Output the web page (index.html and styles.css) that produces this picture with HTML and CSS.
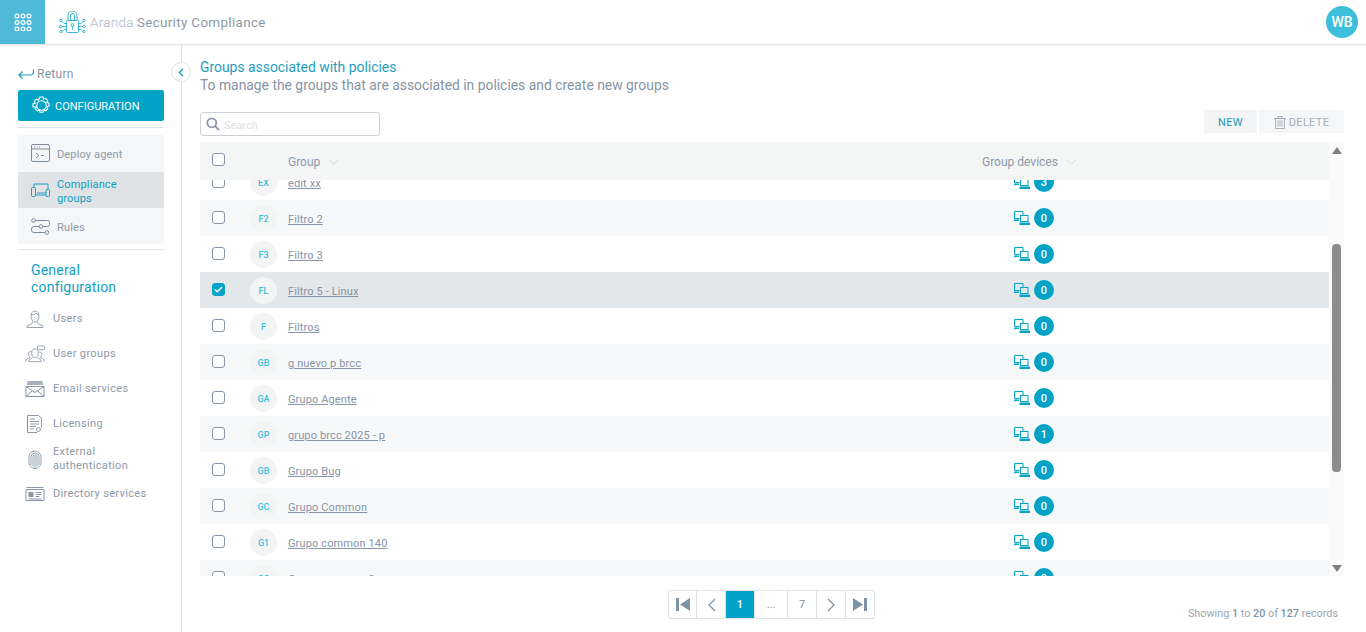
FILE: index.html
```html
<!DOCTYPE html>
<html lang="en">
<head>
<meta charset="utf-8">
<title>Aranda Security Compliance</title>
<link rel="stylesheet" href="styles.css">
</head>
<body>
<svg class="defs" width="0" height="0">
  <defs>
    <symbol id="dev" viewBox="0 0 16 14">
      <path d="M5.500 7.500H.5V.5H9V4" fill="none" stroke="#02a3c6" stroke-width="1"/>
      <rect x="6.500" y="4.500" width="7.500" height="6" fill="none" stroke="#02a3c6" stroke-width="1"/>
      <path d="M0 8.500h5V10H0zM5.500 11.500H16V14H5.500z" fill="#02a3c6"/>
    </symbol>
  </defs>
</svg>
<header class="topbar">
  <div class="apps">
    <svg width="18" height="18" viewBox="0 0 18 18" fill="none" stroke="#fff" stroke-width="1.2">
      <circle cx="3" cy="3" r="1.9"/><circle cx="9" cy="3" r="1.9"/><circle cx="15" cy="3" r="1.9"/>
      <circle cx="3" cy="9.5" r="1.9"/><circle cx="9" cy="9.5" r="1.9"/><circle cx="15" cy="9.5" r="1.9"/>
      <circle cx="3" cy="16" r="1.9"/><circle cx="9" cy="16" r="1.9"/><circle cx="15" cy="16" r="1.9"/>
    </svg>
  </div>
  <svg class="logo" width="27" height="22" viewBox="0 0 27 22" fill="none" stroke="#3bb5d6" stroke-width="1">
    <rect x="7.500" y="9.500" width="12" height="12" rx="1"/>
    <path d="M9 9.500V4.500a4.500 4.500 0 0 1 9 0v5M11.500 9.500V4.500a2 2 0 0 1 4 0v5"/>
    <circle cx="13.500" cy="14" r="1.500"/><path d="M13.500 15.500v3"/>
    <path d="M7.500 12.500H5L3 10.500M7.500 15.500H3M7.500 18.500H5L3 20.500M19.500 12.500H22l2-2M19.500 15.500H24M19.500 18.500H22l2 2"/>
    <circle cx="2" cy="9.500" r="1.200"/><circle cx="1.700" cy="15.500" r="1.200"/><circle cx="2" cy="20.500" r="1.200"/>
    <circle cx="25" cy="9.500" r="1.200"/><circle cx="25.300" cy="15.500" r="1.200"/><circle cx="25" cy="20.500" r="1.200"/>
  </svg>
  <div class="brand"><span class="brand-light">Aranda</span><span class="brand-bold">Security Compliance</span></div>
  <div class="user">WB</div>
</header>
<div class="shell">
  <aside class="sidebar">
    <button class="collapse" type="button">
      <svg width="6" height="9" viewBox="0 0 6 9" fill="none" stroke="#1a9fc2" stroke-width="1.3"><path d="M5 .8 1.300 4.500 5 8.200"/></svg>
    </button>
    <div class="return">
      <svg width="16" height="10" viewBox="0 0 16 10" fill="none" stroke="#1a9fc2" stroke-width="1.200"><path d="M15.500 .5v2.500a3 3 0 0 1-3 3H1M4.500 2.500 1 6l3.500 3.500"/></svg>
      <span>Return</span>
    </div>
    <div class="config-btn">
      <svg width="19" height="19" viewBox="0 0 19 19" fill="none" stroke="#fff" stroke-width="1.100">
        <circle cx="9.500" cy="9.500" r="4.800"/>
        <path d="M8 1h3l.6 2.200 2-.9 2.200 2.100-1 2 2.200.7v3l-2.200.7 1 2-2.200 2.100-2-.9-.6 2.200H8l-.6-2.200-2 .9-2.200-2.100 1-2L1.000 11V8l2.200-.7-1-2 2.200-2.100 2 .9z"/>
      </svg>
      <span>CONFIGURATION</span>
    </div>
    <hr class="rule rule-a">
    <nav class="subnav">
      <a class="subitem">
        <svg width="19" height="18" viewBox="0 0 19 18" fill="none" stroke="#7f8b9b" stroke-width="1"><rect x=".5" y=".5" width="18" height="17" rx="1.500"/><path d="M.5 5h18M5 9l3 2.500L5 14M10 11.500h3M3 3h1M5.500 3h1M8 3h1"/></svg>
        <span>Deploy agent</span>
      </a>
      <a class="subitem active">
        <svg width="19" height="14" viewBox="0 0 19 14" fill="none" stroke="#1a9fc2" stroke-width="1"><path d="M3 4.500V1h14v5.500M6 10h9M5 12h10"/><rect x=".5" y="4.500" width="4" height="9" rx="1"/><rect x="15" y="6.500" width="3.500" height="7" rx="1"/></svg>
        <span>Compliance<br>groups</span>
      </a>
      <a class="subitem subitem-last">
        <svg width="19" height="17" viewBox="0 0 19 17" fill="none" stroke="#7f8b9b" stroke-width="1"><circle cx="2.500" cy="2.500" r="1.800"/><circle cx="10" cy="8.500" r="1.800"/><circle cx="16" cy="14.500" r="1.800"/><path d="M4.500 2.500h12q2 0 2 2v2q0 2-2 2h-4.500M8 8.500H3q-2.500 0-2.500 2.500v1q0 2.500 2.500 2.500h11"/></svg>
        <span>Rules</span>
      </a>
    </nav>
    <hr class="rule rule-b">
    <h2 class="general">General configuration</h2>
    <ul class="menu">
      <li class="menu-item mi-users">
        <svg width="18" height="18" viewBox="0 0 18 18" fill="none" stroke="#8a97a8" stroke-width=".9"><path d="M5 6c0-3 1.500-5 4-5s4 2 4 5-2 6-4 6-4-3-4-6zM6.500 11.500 6 13.500 1 16v1.500h16V16l-5-2.500-.5-2M5 5q4 0 5-2 1 2 3 2"/></svg>
        <span>Users</span>
      </li>
      <li class="menu-item mi-groups">
        <svg width="21" height="18" viewBox="0 0 21 18" fill="none" stroke="#8a97a8" stroke-width=".9"><rect x="13" y=".5" width="7.500" height="4" rx="1"/><path d="M7 8c0-3 1.300-4.500 3.500-4.500S14 5 14 8s-1.700 5-3.500 5S7 11 7 8zM8 13l-4 2.500V17h13v-1.500L13 13M6.500 6C4.500 6 3.500 7.500 3.500 9s1 3 2 3.500L1 15v2M15 7c1.500 0 2.500 1 2.500 2.500S16.500 12 16 12.500l4 2.500v2"/></svg>
        <span>User groups</span>
      </li>
      <li class="menu-item mi-email">
        <svg width="19" height="16" viewBox="0 0 19 16" fill="none" stroke="#8a97a8" stroke-width="1"><rect x=".5" y="5.500" width="18" height="10"/><path d="m.5 5.500 9 6 9-6M.5 15.500l6.500-6M18.500 15.500 12 9.500"/><path d="M2 1h15M1.500 3h16" stroke-width="1.300"/></svg>
        <span>Email services</span>
      </li>
      <li class="menu-item mi-lic">
        <svg width="16" height="18" viewBox="0 0 16 18" fill="none" stroke="#8a97a8" stroke-width="1"><path d="M10 17.500H.5V.5h11l3 3v9"/><path d="M3 4h5M3 6.500h9M3 9h9M3 11.500h6M3 14h4" stroke-width="1.200"/><circle cx="11.500" cy="14.500" r="2"/></svg>
        <span>Licensing</span>
      </li>
      <li class="menu-item mi-ext">
        <svg width="14" height="19" viewBox="0 0 14 19" fill="none" stroke="#8a97a8" stroke-width=".9"><path d="M1 13V7a6 6 0 0 1 12 0v6c0 3-3 5.500-6 5.500S1 16 1 13zM3 15V7a4 4 0 0 1 8 0v8M5 16.500V7a2 2 0 0 1 4 0v9.500M7 6v12"/></svg>
        <span>External<br>authentication</span>
      </li>
      <li class="menu-item mi-dir">
        <svg width="19" height="16" viewBox="0 0 19 16" fill="none" stroke="#8a97a8" stroke-width="1"><path d="M1 1.500h17M.5 3.500h18v11h-18z"/><rect x="3" y="6" width="5" height="5" fill="#8a97a8" stroke="none"/><path d="M10 6.500h6M10 8.500h6M10 10.500h4M3 13h13"/></svg>
        <span>Directory services</span>
      </li>
    </ul>
  </aside>
  <main class="content">
    <h1 class="title">Groups associated with policies</h1>
    <p class="subtitle">To manage the groups that are associated in policies and create new groups</p>
    <div class="toolbar">
      <label class="search">
        <svg width="14" height="14" viewBox="0 0 14 14" fill="none" stroke="#8a97a8" stroke-width="1.800"><circle cx="5.800" cy="5.800" r="4.500"/><path d="m9 9 4 4"/></svg>
        <span class="search-text">Search</span>
      </label>
      <div class="actions">
        <button class="btn btn-new" type="button">NEW</button>
        <button class="btn btn-del" type="button">
          <svg width="12" height="13" viewBox="0 0 12 13" fill="none" stroke="#a9afb6" stroke-width="1"><path d="M0 2.500h12M4 2.500V.5h4v2M1.500 2.500v10h9v-10M4 4.500v6M6 4.500v6M8 4.500v6"/></svg>
          DELETE
        </button>
      </div>
    </div>
    <div class="table-wrap">
      <div class="table">
        <div class="thead">
          <span class="cb"></span>
          <span class="th th-group">Group
            <svg width="11" height="6" viewBox="0 0 11 6" fill="none" stroke="#d4d9de" stroke-width="1"><path d="m.5.500 5 4.500 5-4.500"/></svg>
          </span>
          <span class="th th-dev">Group devices
            <svg width="11" height="6" viewBox="0 0 11 6" fill="none" stroke="#d4d9de" stroke-width="1"><path d="m.5.500 5 4.500 5-4.500"/></svg>
          </span>
        </div>
        <div class="tbody">
          <div class="rows">
            <div class="row"><span class="cb"></span><span class="av">EX</span><a class="name">edit xx</a><span class="dev"><svg class="di" width="16" height="14"><use href="#dev"/></svg><b class="count">3</b></span></div>
            <div class="row alt"><span class="cb"></span><span class="av">F2</span><a class="name">Filtro 2</a><span class="dev"><svg class="di" width="16" height="14"><use href="#dev"/></svg><b class="count">0</b></span></div>
            <div class="row"><span class="cb"></span><span class="av">F3</span><a class="name">Filtro 3</a><span class="dev"><svg class="di" width="16" height="14"><use href="#dev"/></svg><b class="count">0</b></span></div>
            <div class="row sel"><span class="cb on"><svg width="9" height="7" viewBox="0 0 9 7" fill="none" stroke="#fff" stroke-width="1.400"><path d="m1 3.500 2.300 2.300L8 1"/></svg></span><span class="av">FL</span><a class="name">Filtro 5 - Linux</a><span class="dev"><svg class="di" width="16" height="14"><use href="#dev"/></svg><b class="count">0</b></span></div>
            <div class="row"><span class="cb"></span><span class="av">F</span><a class="name">Filtros</a><span class="dev"><svg class="di" width="16" height="14"><use href="#dev"/></svg><b class="count">0</b></span></div>
            <div class="row alt"><span class="cb"></span><span class="av">GB</span><a class="name">g nuevo p brcc</a><span class="dev"><svg class="di" width="16" height="14"><use href="#dev"/></svg><b class="count">0</b></span></div>
            <div class="row"><span class="cb"></span><span class="av">GA</span><a class="name">Grupo Agente</a><span class="dev"><svg class="di" width="16" height="14"><use href="#dev"/></svg><b class="count">0</b></span></div>
            <div class="row alt"><span class="cb"></span><span class="av">GP</span><a class="name">grupo brcc 2025 - p</a><span class="dev"><svg class="di" width="16" height="14"><use href="#dev"/></svg><b class="count">1</b></span></div>
            <div class="row"><span class="cb"></span><span class="av">GB</span><a class="name">Grupo Bug</a><span class="dev"><svg class="di" width="16" height="14"><use href="#dev"/></svg><b class="count">0</b></span></div>
            <div class="row alt"><span class="cb"></span><span class="av">GC</span><a class="name">Grupo Common</a><span class="dev"><svg class="di" width="16" height="14"><use href="#dev"/></svg><b class="count">0</b></span></div>
            <div class="row"><span class="cb"></span><span class="av">G1</span><a class="name">Grupo common 140</a><span class="dev"><svg class="di" width="16" height="14"><use href="#dev"/></svg><b class="count">0</b></span></div>
            <div class="row alt"><span class="cb"></span><span class="av">GC</span><a class="name">Grupo common 2</a><span class="dev"><svg class="di" width="16" height="14"><use href="#dev"/></svg><b class="count">0</b></span></div>
          </div>
        </div>
      </div>
      <div class="scrollbar">
        <svg width="10" height="7" viewBox="0 0 10 7" fill="#7f7f7f"><path d="M5 0l5 7H0z"/></svg>
        <div class="thumb"></div>
        <svg class="sb-down" width="10" height="7" viewBox="0 0 10 7" fill="#7f7f7f"><path d="M5 7 10 0H0z"/></svg>
      </div>
    </div>
    <div class="footer">
      <div class="pager">
        <span class="pg"><svg width="14" height="13" viewBox="0 0 14 13" fill="#7f93a8"><path d="M0 0h3v13H0zM14 0v13L4 6.500z"/></svg></span>
        <span class="pg"><svg width="9" height="14" viewBox="0 0 9 14" fill="none" stroke="#7f93a8" stroke-width="1.300"><path d="M8 1 2 7l6 6"/></svg></span>
        <span class="pg current">1</span>
        <span class="pg pg-gap">...</span>
        <span class="pg">7</span>
        <span class="pg"><svg width="9" height="14" viewBox="0 0 9 14" fill="none" stroke="#7f93a8" stroke-width="1.300"><path d="m1 1 6 6-6 6"/></svg></span>
        <span class="pg"><svg width="14" height="13" viewBox="0 0 14 13" fill="#7f93a8"><path d="M14 0h-3v13h3zM0 0v13l10-6.500z"/></svg></span>
      </div>
      <p class="records">Showing <b>1</b> to <b>20</b> of <b>127</b> records</p>
    </div>
  </main>
</div>
</body>
</html>
```
FILE: styles.css
```css
* { box-sizing: border-box; }
html, body { height: 100%; }
body {
  margin: 0;
  overflow: hidden;
  background: #fff;
  color: #8794a3;
  font-family: Roboto, "Liberation Sans", sans-serif;
  font-size: 11px;
}
.defs { position: absolute; }

.topbar {
  display: flex;
  align-items: center;
  height: 45px;
  border-bottom: 1px solid #e4e7ea;
  box-shadow: 0 1px 2px rgba(0, 0, 0, .05);
}
.apps {
  width: 45px;
  height: 44px;
  background: #4fbad8;
  display: flex;
  align-items: center;
  justify-content: center;
}
.logo { margin-left: 14px; }
.brand { margin-left: 4px; font-size: 13.4px; letter-spacing: .35px; }
.brand-light { color: #a9b3bd; font-weight: 300; margin-right: 3px; }
.brand-bold { color: #8f989f; }
.user {
  margin-left: auto;
  margin-right: 8px;
  width: 32px;
  height: 32px;
  border-radius: 50%;
  background: #3dbfdc;
  color: #fff;
  font-size: 14px;
  font-weight: 500;
  display: flex;
  align-items: center;
  justify-content: center;
}

.shell { display: flex; height: 587px; }
.sidebar {
  position: relative;
  width: 182px;
  flex: none;
  border-right: 1px solid #dfe2e5;
  padding: 22px 17px 0 18px;
}
.collapse {
  position: absolute;
  right: -10px;
  top: 17px;
  width: 20px;
  height: 20px;
  padding: 0;
  border: 1px solid #dfe2e5;
  border-radius: 50%;
  background: #fff;
  display: flex;
  align-items: center;
  justify-content: center;
}
.return {
  display: flex;
  align-items: center;
  gap: 3px;
  height: 14px;
  font-size: 12px;
  letter-spacing: .3px;
  color: #8794a3;
}
.config-btn {
  display: flex;
  align-items: center;
  gap: 4px;
  margin-top: 9px;
  height: 31px;
  padding-left: 14px;
  border-radius: 2px;
  background: #02a3c6;
  color: #fff;
  font-size: 11px;
}
.config-btn span { padding-top: 2px; }
.rule { margin: 0; border: 0; border-top: 1px solid #e1e4e7; }
.rule-a { margin-top: 6px; }
.rule-b { margin-top: 5px; }
.subnav {
  margin-top: 7px;
  background: #f5f6f7;
  border-radius: 2px;
  display: flex;
  flex-direction: column;
  gap: 1px;
}
.subitem {
  display: flex;
  align-items: center;
  gap: 7px;
  height: 36px;
  padding-left: 13px;
  line-height: 14px;
  letter-spacing: .15px;
  color: #8f9aa7;
}
.subitem span { padding-top: 3px; }
.subitem.active {
  background: #e0e3e6;
  border-radius: 2px;
  color: #0f9fc3;
}
.subitem-last { height: 35px; }
.subitem-last span { padding-top: 3px; }
.general {
  margin: 12px 0 0 13px;
  font-size: 14px;
  font-weight: 400;
  line-height: 17px;
  color: #0f9fc3;
  letter-spacing: .2px;
  width: 100px;
}
.menu { list-style: none; margin: 0; padding: 0 0 0 7px; }
.menu-item {
  display: flex;
  align-items: center;
  line-height: 14px;
  letter-spacing: .35px;
  color: #8d99a8;
}
.menu-item svg { flex: none; width: 28px; padding-right: 8px; overflow: visible; }
.mi-users { height: 20px; margin-top: 13px; }
.mi-groups { height: 20px; margin-top: 15px; }
.mi-email { height: 20px; margin-top: 15px; }
.mi-lic { height: 20px; margin-top: 15px; }
.mi-ext { height: 28px; margin-top: 11px; }
.mi-dir { height: 20px; margin-top: 11px; }

.content { flex: 1; min-width: 0; padding: 13px 22px 0 18px; }
.title {
  margin: 0;
  font-size: 13.9px;
  font-weight: 400;
  line-height: 18px;
  color: #1f9dbe;
}
.subtitle { margin: 0; font-size: 13.86px; line-height: 18px; color: #8794a3; }
.toolbar {
  display: flex;
  justify-content: space-between;
  align-items: flex-start;
  margin-top: 16px;
  height: 32px;
}
.search {
  display: flex;
  align-items: center;
  gap: 4px;
  width: 180px;
  height: 24px;
  margin-top: 2px;
  padding-left: 5px;
  border: 1px solid #ccd0d4;
  border-radius: 3px;
  color: #dde1e5;
}
.search-text { padding-top: 2px; }
.actions { display: flex; gap: 2px; }
.btn {
  height: 23px;
  padding: 2px 0 0;
  border: 0;
  border-radius: 2px;
  background: #f2f4f5;
  font: inherit;
  letter-spacing: .3px;
  display: flex;
  align-items: center;
  justify-content: center;
  gap: 3px;
}
.btn-new { width: 53px; color: #1899bb; }
.btn-del { width: 85px; color: #a9afb6; background: #f5f6f7; }

.table-wrap { display: flex; height: 434px; }
.table { width: 1129px; display: flex; flex-direction: column; }
.thead {
  flex: none;
  display: flex;
  align-items: center;
  height: 38px;
  padding-left: 12px;
  background: #f4f6f6;
}
.thead .cb { margin-top: -4px; }
.th { display: flex; align-items: center; gap: 8px; font-size: 12px; padding-top: 2px; color: #8d99a8; }
.th-group { margin-left: 63px; width: 694px; }
.tbody { flex: 1; min-height: 0; overflow: hidden; }
.rows { margin-top: -16px; }
.row {
  display: flex;
  align-items: center;
  height: 36px;
  padding-left: 12px;
}
.row.alt { background: #f7f8fa; }
.row.sel { background: #e4e7ea; }
.cb {
  flex: none;
  width: 13px;
  height: 13px;
  margin-top: -2px;
  border: 1px solid #8494a8;
  border-radius: 3px;
  background: #fff;
  display: flex;
  align-items: center;
  justify-content: center;
}
.cb.on { background: #02a3c6; border-color: #02a3c6; }
.av {
  flex: none;
  margin-left: 25px;
  width: 27px;
  height: 27px;
  padding-top: 1px;
  border-radius: 50%;
  background: #f3f5f5;
  color: #3dbfdc;
  font-size: 9px;
  font-weight: 500;
  display: flex;
  align-items: center;
  justify-content: center;
}
.name {
  margin-left: 11px;
  width: 726px;
  padding-top: 2px;
  letter-spacing: .13px;
  color: #8794a3;
  text-decoration: underline;
}
.dev { display: flex; align-items: center; gap: 4px; }
.di { display: block; }
.count {
  width: 20px;
  height: 20px;
  padding-top: 1px;
  border-radius: 50%;
  background: #02a3c6;
  color: #fff;
  font-size: 11px;
  font-weight: 500;
  display: flex;
  align-items: center;
  justify-content: center;
}
.scrollbar {
  width: 15px;
  background: #fafafa;
  display: flex;
  flex-direction: column;
  align-items: center;
  padding-top: 5px;
}
.thumb {
  width: 9px;
  height: 228px;
  margin-top: 90px;
  border-radius: 4px;
  background: #8c8c8c;
}
.sb-down { margin-top: 93px; }

.footer { position: relative; display: flex; justify-content: center; padding: 14px 0 0; margin-left: -1px; }
.pager {
  display: flex;
  height: 29px;
  border: 1px solid #e0e2e4;
  border-left: 0;
  border-right: 0;
  border-radius: 3px;
}
.pg {
  width: 29px;
  border-right: 1px solid #e0e2e4;
  display: flex;
  align-items: center;
  justify-content: center;
  color: #8794a3;
}
.pg:first-child { border-left: 1px solid #e0e2e4; border-radius: 3px 0 0 3px; }
.pg:last-child { border-radius: 0 3px 3px 0; }
.pg-gap { width: 33px; }
.pg.current { background: #02a3c6; color: #fff; font-weight: 500; }
.records {
  position: absolute;
  right: 6px;
  top: 31px;
  margin: 0;
  color: #9aa6b3;
  font-size: 10.8px;
}
.records b { font-weight: 500; color: #7f93a8; }
```
